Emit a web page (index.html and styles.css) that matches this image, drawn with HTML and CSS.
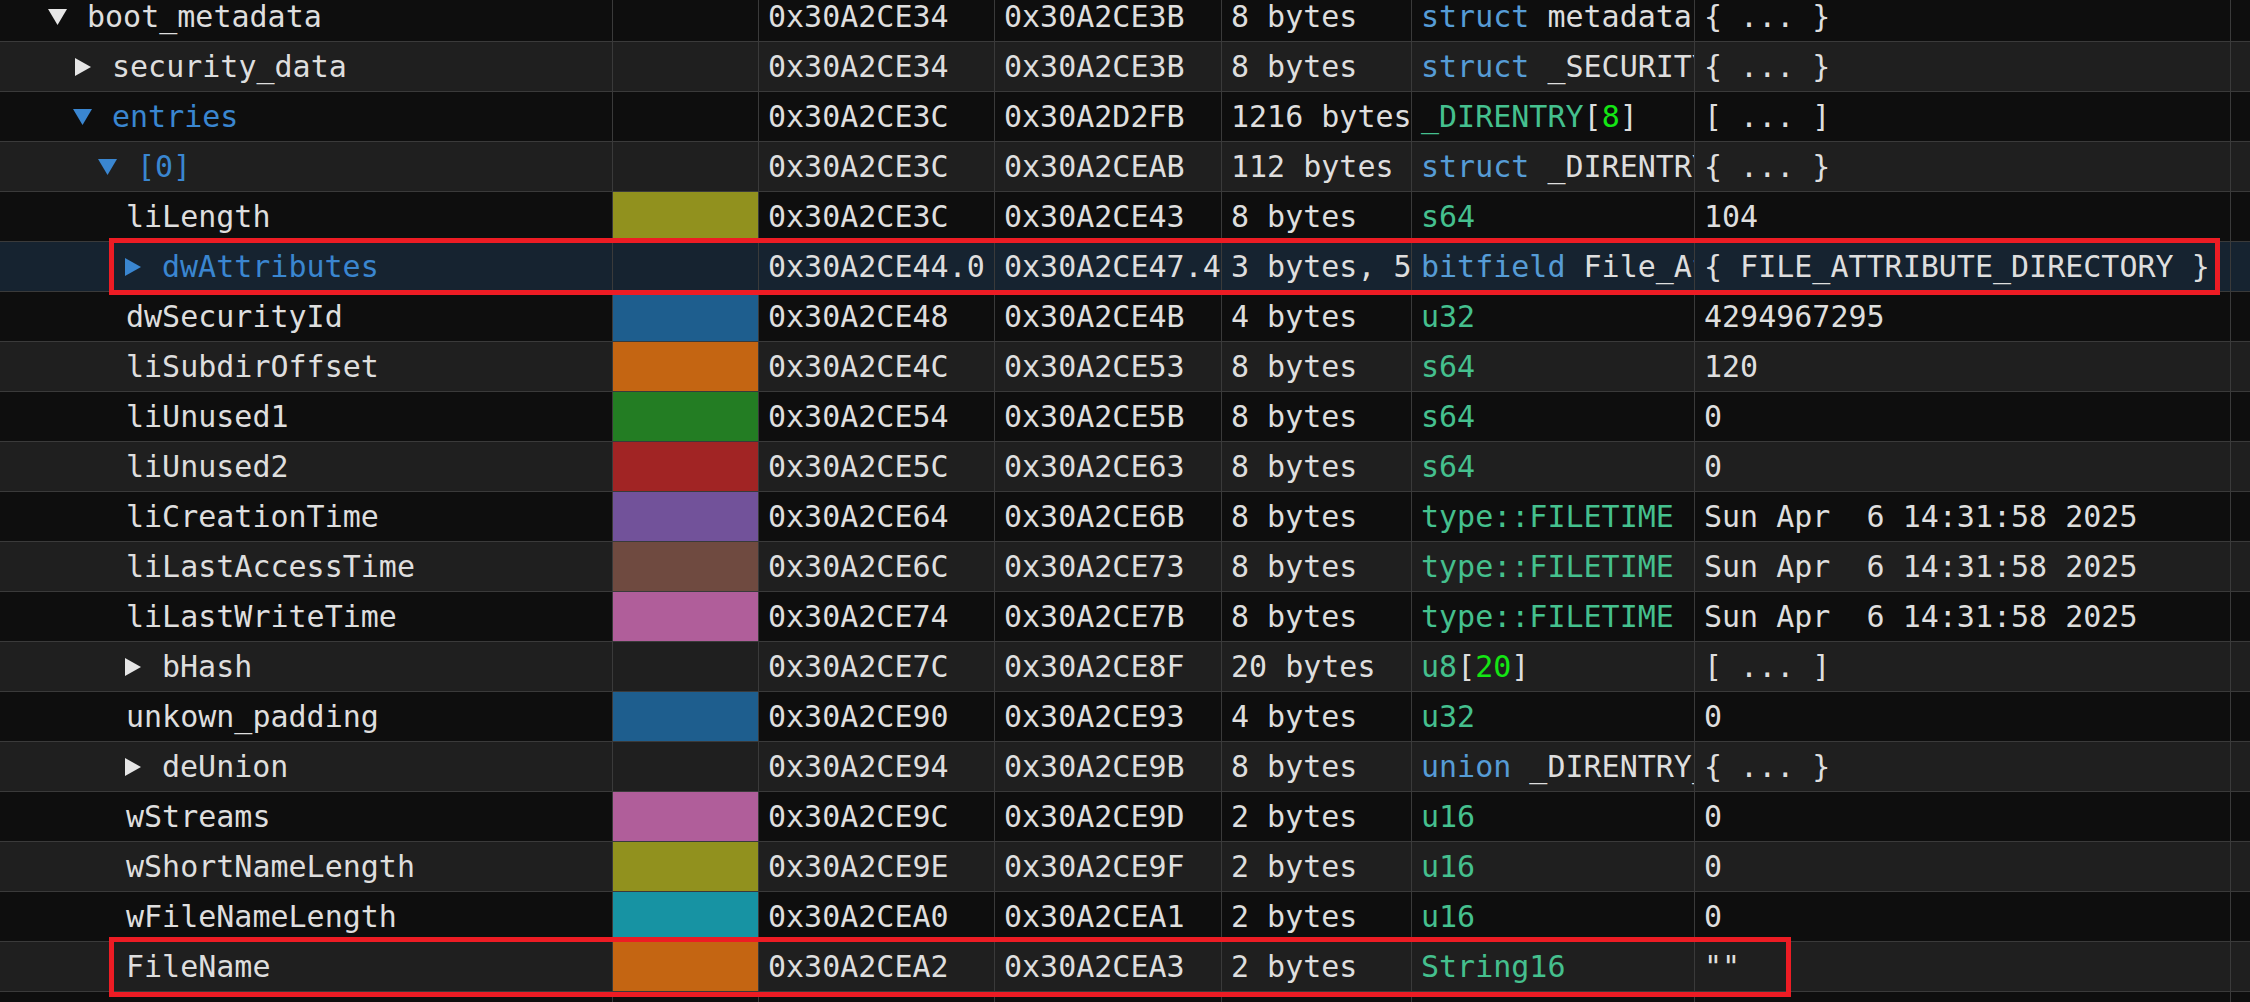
FILE: index.html
```html
<!DOCTYPE html>
<html>
<head>
<meta charset="utf-8">
<link rel="stylesheet" href="styles.css">
</head>
<body>
<div class="table">
  <div class="row">
    <div class="cell name l1"><span class="tog"><svg width="19" height="16" viewBox="0 0 19 16"><path d="M0 0H19L9.5 16Z"/></svg></span><span>boot_metadata</span></div>
    <div class="cell"></div><div class="cell">0x30A2CE34</div><div class="cell">0x30A2CE3B</div><div class="cell">8 bytes</div>
    <div class="cell"><span class="kw">struct</span> metadata</div><div class="cell">{ ... }</div><div class="cell"></div>
  </div>
  <div class="row">
    <div class="cell name l2"><span class="tog"><svg width="16" height="18" viewBox="0 0 16 18"><path d="M0 0L16 9L0 18Z"/></svg></span><span>security_data</span></div>
    <div class="cell"></div><div class="cell">0x30A2CE34</div><div class="cell">0x30A2CE3B</div><div class="cell">8 bytes</div>
    <div class="cell"><span class="kw">struct</span> _SECURITY_DATA</div><div class="cell">{ ... }</div><div class="cell"></div>
  </div>
  <div class="row">
    <div class="cell name l2 hl"><span class="tog"><svg width="19" height="16" viewBox="0 0 19 16"><path d="M0 0H19L9.5 16Z"/></svg></span><span>entries</span></div>
    <div class="cell"></div><div class="cell">0x30A2CE3C</div><div class="cell">0x30A2D2FB</div><div class="cell">1216 bytes</div>
    <div class="cell"><span class="ty">_DIRENTRY</span>[<span class="num">8</span>]</div><div class="cell">[ ... ]</div><div class="cell"></div>
  </div>
  <div class="row">
    <div class="cell name l3 hl"><span class="tog"><svg width="19" height="16" viewBox="0 0 19 16"><path d="M0 0H19L9.5 16Z"/></svg></span><span>[0]</span></div>
    <div class="cell"></div><div class="cell">0x30A2CE3C</div><div class="cell">0x30A2CEAB</div><div class="cell">112 bytes</div>
    <div class="cell"><span class="kw">struct</span> _DIRENTRY</div><div class="cell">{ ... }</div><div class="cell"></div>
  </div>
  <div class="row">
    <div class="cell name l4"><span class="leaf">liLength</span></div>
    <div class="cell sw-olive"></div><div class="cell">0x30A2CE3C</div><div class="cell">0x30A2CE43</div><div class="cell">8 bytes</div>
    <div class="cell"><span class="ty">s64</span></div><div class="cell">104</div><div class="cell"></div>
  </div>
  <div class="row sel">
    <div class="cell name l4 hl"><span class="tog"><svg width="16" height="18" viewBox="0 0 16 18"><path d="M0 0L16 9L0 18Z"/></svg></span><span>dwAttributes</span></div>
    <div class="cell"></div><div class="cell">0x30A2CE44.0</div><div class="cell">0x30A2CE47.4</div><div class="cell">3 bytes, 5 bits</div>
    <div class="cell"><span class="kw">bitfield</span> File_Attributes</div><div class="cell">{ FILE_ATTRIBUTE_DIRECTORY }</div><div class="cell"></div>
  </div>
  <div class="row">
    <div class="cell name l4"><span class="leaf">dwSecurityId</span></div>
    <div class="cell sw-blue"></div><div class="cell">0x30A2CE48</div><div class="cell">0x30A2CE4B</div><div class="cell">4 bytes</div>
    <div class="cell"><span class="ty">u32</span></div><div class="cell">4294967295</div><div class="cell"></div>
  </div>
  <div class="row">
    <div class="cell name l4"><span class="leaf">liSubdirOffset</span></div>
    <div class="cell sw-orange"></div><div class="cell">0x30A2CE4C</div><div class="cell">0x30A2CE53</div><div class="cell">8 bytes</div>
    <div class="cell"><span class="ty">s64</span></div><div class="cell">120</div><div class="cell"></div>
  </div>
  <div class="row">
    <div class="cell name l4"><span class="leaf">liUnused1</span></div>
    <div class="cell sw-green"></div><div class="cell">0x30A2CE54</div><div class="cell">0x30A2CE5B</div><div class="cell">8 bytes</div>
    <div class="cell"><span class="ty">s64</span></div><div class="cell">0</div><div class="cell"></div>
  </div>
  <div class="row">
    <div class="cell name l4"><span class="leaf">liUnused2</span></div>
    <div class="cell sw-red"></div><div class="cell">0x30A2CE5C</div><div class="cell">0x30A2CE63</div><div class="cell">8 bytes</div>
    <div class="cell"><span class="ty">s64</span></div><div class="cell">0</div><div class="cell"></div>
  </div>
  <div class="row">
    <div class="cell name l4"><span class="leaf">liCreationTime</span></div>
    <div class="cell sw-purple"></div><div class="cell">0x30A2CE64</div><div class="cell">0x30A2CE6B</div><div class="cell">8 bytes</div>
    <div class="cell"><span class="ty">type::FILETIME</span></div><div class="cell">Sun Apr  6 14:31:58 2025</div><div class="cell"></div>
  </div>
  <div class="row">
    <div class="cell name l4"><span class="leaf">liLastAccessTime</span></div>
    <div class="cell sw-brown"></div><div class="cell">0x30A2CE6C</div><div class="cell">0x30A2CE73</div><div class="cell">8 bytes</div>
    <div class="cell"><span class="ty">type::FILETIME</span></div><div class="cell">Sun Apr  6 14:31:58 2025</div><div class="cell"></div>
  </div>
  <div class="row">
    <div class="cell name l4"><span class="leaf">liLastWriteTime</span></div>
    <div class="cell sw-pink"></div><div class="cell">0x30A2CE74</div><div class="cell">0x30A2CE7B</div><div class="cell">8 bytes</div>
    <div class="cell"><span class="ty">type::FILETIME</span></div><div class="cell">Sun Apr  6 14:31:58 2025</div><div class="cell"></div>
  </div>
  <div class="row">
    <div class="cell name l4"><span class="tog"><svg width="16" height="18" viewBox="0 0 16 18"><path d="M0 0L16 9L0 18Z"/></svg></span><span>bHash</span></div>
    <div class="cell"></div><div class="cell">0x30A2CE7C</div><div class="cell">0x30A2CE8F</div><div class="cell">20 bytes</div>
    <div class="cell"><span class="ty">u8</span>[<span class="num">20</span>]</div><div class="cell">[ ... ]</div><div class="cell"></div>
  </div>
  <div class="row">
    <div class="cell name l4"><span class="leaf">unkown_padding</span></div>
    <div class="cell sw-blue"></div><div class="cell">0x30A2CE90</div><div class="cell">0x30A2CE93</div><div class="cell">4 bytes</div>
    <div class="cell"><span class="ty">u32</span></div><div class="cell">0</div><div class="cell"></div>
  </div>
  <div class="row">
    <div class="cell name l4"><span class="tog"><svg width="16" height="18" viewBox="0 0 16 18"><path d="M0 0L16 9L0 18Z"/></svg></span><span>deUnion</span></div>
    <div class="cell"></div><div class="cell">0x30A2CE94</div><div class="cell">0x30A2CE9B</div><div class="cell">8 bytes</div>
    <div class="cell"><span class="kw">union</span> _DIRENTRY_UNION</div><div class="cell">{ ... }</div><div class="cell"></div>
  </div>
  <div class="row">
    <div class="cell name l4"><span class="leaf">wStreams</span></div>
    <div class="cell sw-pink"></div><div class="cell">0x30A2CE9C</div><div class="cell">0x30A2CE9D</div><div class="cell">2 bytes</div>
    <div class="cell"><span class="ty">u16</span></div><div class="cell">0</div><div class="cell"></div>
  </div>
  <div class="row">
    <div class="cell name l4"><span class="leaf">wShortNameLength</span></div>
    <div class="cell sw-olive"></div><div class="cell">0x30A2CE9E</div><div class="cell">0x30A2CE9F</div><div class="cell">2 bytes</div>
    <div class="cell"><span class="ty">u16</span></div><div class="cell">0</div><div class="cell"></div>
  </div>
  <div class="row">
    <div class="cell name l4"><span class="leaf">wFileNameLength</span></div>
    <div class="cell sw-teal"></div><div class="cell">0x30A2CEA0</div><div class="cell">0x30A2CEA1</div><div class="cell">2 bytes</div>
    <div class="cell"><span class="ty">u16</span></div><div class="cell">0</div><div class="cell"></div>
  </div>
  <div class="row">
    <div class="cell name l4"><span class="leaf">FileName</span></div>
    <div class="cell sw-orange"></div><div class="cell">0x30A2CEA2</div><div class="cell">0x30A2CEA3</div><div class="cell">2 bytes</div>
    <div class="cell"><span class="ty">String16</span></div><div class="cell">""</div><div class="cell"></div>
  </div>
  <div class="row">
    <div class="cell name l4"><span class="leaf">padding</span></div>
    <div class="cell"></div><div class="cell">0x30A2CEA4</div><div class="cell">0x30A2CEAB</div><div class="cell">8 bytes</div>
    <div class="cell"><span class="ty">padding</span></div><div class="cell">[ ... ]</div><div class="cell"></div>
  </div>
</div>
<div class="mark mark-attr"></div>
<div class="mark mark-name"></div>
</body>
</html>
```

FILE: styles.css
```css
html, body {
  margin: 0;
  padding: 0;
  background: #0e0e0e;
  width: 2250px;
  height: 1002px;
  overflow: hidden;
}
body {
  position: relative;
  font-family: "DejaVu Sans Mono", monospace;
  font-size: 30px;
  color: #dedede;
}
.table {
  margin-top: -8px;
}
.row {
  display: grid;
  grid-template-columns: 612px 146px 236px 227px 190px 283px 536px 1fr;
  height: 50px;
  box-sizing: border-box;
  border-bottom: 1px solid #3a3a3a;
  background: #0e0e0e;
}
.row:nth-child(even) {
  background: #1f1f1f;
}
.row.sel {
  background: #162330;
}
.cell {
  box-sizing: border-box;
  border-left: 1px solid #3a3a3a;
  padding-left: 9px;
  line-height: 49px;
  white-space: pre;
  overflow: hidden;
}
.cell.name {
  border-left: none;
  display: flex;
  align-items: center;
  line-height: normal;
}
.l1 { padding-left: 48px; }
.l2 { padding-left: 73px; }
.l3 { padding-left: 98px; }
.l4 { padding-left: 123px; }
.tog {
  display: inline-flex;
  justify-content: center;
  align-items: center;
  width: 19px;
  margin-right: 20px;
  fill: #e6e6e6;
}
.leaf {
  margin-left: 3px;
}
.hl {
  color: #3a86d0;
}
.hl .tog {
  fill: #3a86d0;
}
.kw { color: #569cd6; }
.ty { color: #45c08e; }
.num { color: #14e614; }

.sw-olive { background: #91911e; }
.sw-blue { background: #1e5e8e; }
.sw-orange { background: #c46512; }
.sw-green { background: #237d23; }
.sw-red { background: #a12424; }
.sw-purple { background: #72529a; }
.sw-brown { background: #6f4a40; }
.sw-pink { background: #b05e9a; }
.sw-teal { background: #1793a3; }

.mark {
  position: absolute;
  box-sizing: border-box;
  border: 5px solid #ed1c24;
}
.mark-attr {
  left: 109px;
  top: 238px;
  width: 2111px;
  height: 57px;
}
.mark-name {
  left: 109px;
  top: 937px;
  width: 1682px;
  height: 60px;
}
```
